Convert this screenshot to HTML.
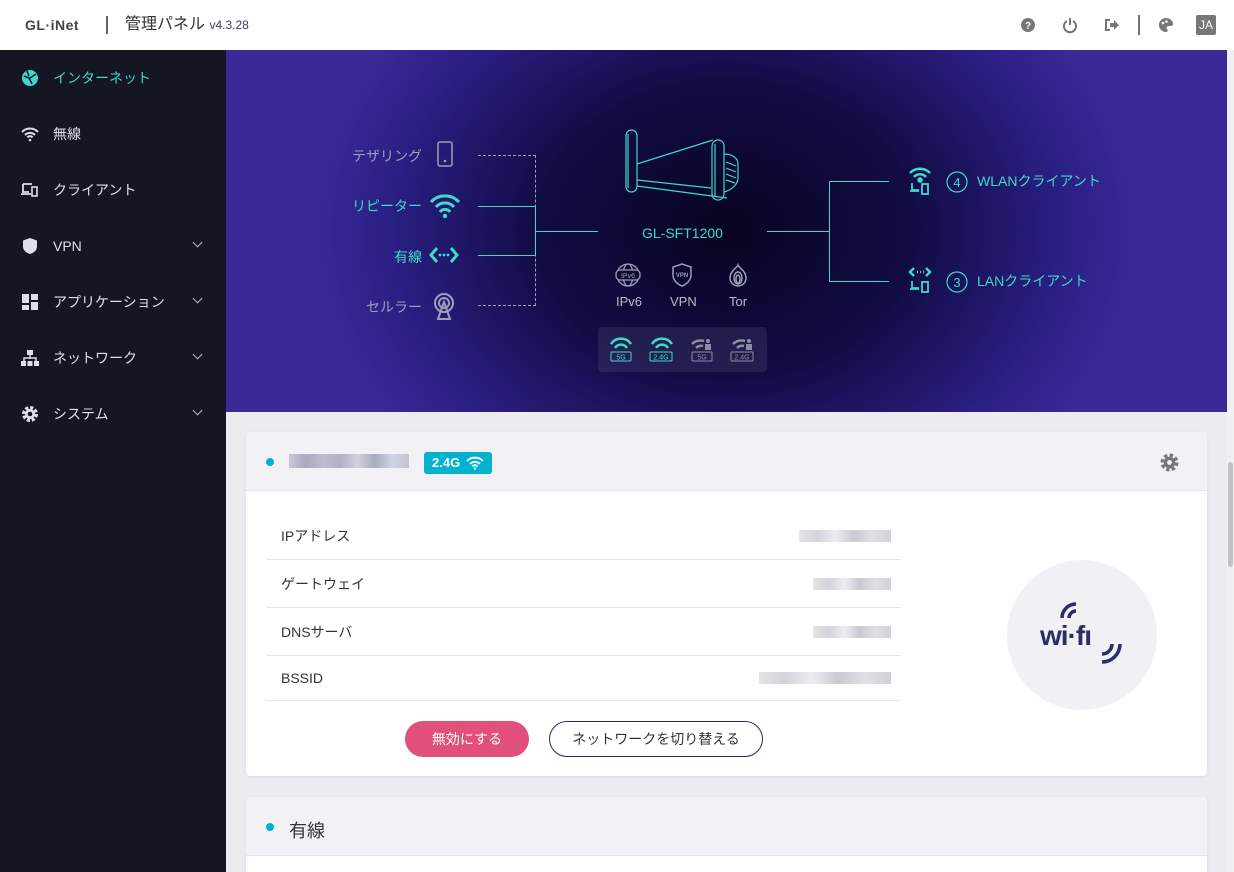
<!DOCTYPE html>
<html><head><meta charset="utf-8"><style>
*{box-sizing:border-box;margin:0;padding:0}
html,body{width:1234px;height:872px;overflow:hidden}
body{font-family:"Liberation Sans","Noto Sans CJK JP",sans-serif;background:#ebebf0;position:relative}
.hdr{position:absolute;left:0;top:0;width:1234px;height:50px;background:#fff}
.side{position:absolute;left:0;top:50px;width:226px;height:822px;background:#141624}
.nav{position:absolute;left:0;width:226px;height:56px;display:flex;align-items:center;color:#dde0ea;font-size:14px}
.nav .ic{position:absolute;left:21px;width:18px;height:18px}
.nav .t{position:absolute;left:53px}
.nav .ch{position:absolute;left:194px;width:7px;height:7px;border-right:1.3px solid #b8bccb;border-bottom:1.3px solid #b8bccb;transform:rotate(45deg);top:21px}
.hero{position:absolute;left:226px;top:50px;width:1001px;height:362px;background:radial-gradient(ellipse 420px 330px at 500px 180px,#070420 0%,#120c45 45%,#2a1f83 80%,#3a2a98 100%)}
.sb{position:absolute;left:1227px;top:50px;width:7px;height:822px;background:#f0f0f0}
.sb div{position:absolute;left:1px;top:412px;width:5px;height:105px;background:#c1c1c1;border-radius:3px}
.card{position:absolute;left:246px;width:961px;background:#fff;border-radius:4px;box-shadow:0 1px 3px rgba(0,0,0,.08)}
.ch2{height:59px;background:#f2f2f6;border-bottom:1px solid #e4e4ea;position:relative;border-radius:4px 4px 0 0}
.dot{position:absolute;left:20px;top:26px;width:8px;height:8px;border-radius:50%;background:#00b0d0}
.row{position:absolute;left:20px;width:635px;height:48px;border-bottom:1px solid #e6e6ea;font-size:14px;color:#333;display:flex;align-items:center;padding-left:15px}
.blur{position:absolute;right:10px;top:18px;height:12px;background:linear-gradient(90deg,#ddd,#c8c8d2,#e8e8ee,#bcbcc8,#d8d8de,#c4c4cc);opacity:.8}
.tl{position:absolute;font-size:14px;white-space:nowrap;line-height:16px}
.ln{position:absolute;background:#3fd9c8}
.dl{position:absolute;border-color:#9aa0b8;border-style:dashed}
</style></head><body>
<div class="hdr">
 <div style="position:absolute;left:25px;top:17px;font-size:14px;font-weight:bold;color:#444;letter-spacing:.5px;line-height:16px">GL·iNet</div>
 <div style="position:absolute;left:106px;top:16px;width:2px;height:18px;background:#666"></div>
 <div style="position:absolute;left:125px;top:16px;font-size:16px;color:#333;line-height:18px">管理パネル <span style="font-size:12px;color:#3a3a6a">v4.3.28</span></div>
 <svg style="position:absolute;left:1020px;top:17px" width="16" height="16"><circle cx="8" cy="8" r="7" fill="#777"/><text x="8" y="12" font-size="10" font-weight="bold" fill="#fff" text-anchor="middle" font-family="Liberation Sans">?</text></svg>
 <svg style="position:absolute;left:1062px;top:16px" width="16" height="18"><path d="M5 5a6 6 0 1 0 6 0" fill="none" stroke="#777" stroke-width="2"/><line x1="8" y1="2" x2="8" y2="9" stroke="#777" stroke-width="2"/></svg>
 <svg style="position:absolute;left:1104px;top:18px" width="16" height="14"><path d="M6 2H2v10h4" fill="none" stroke="#777" stroke-width="2"/><path d="M6 5h4V2l5 5-5 5V9H6z" fill="#777"/></svg>
 <div style="position:absolute;left:1138px;top:15px;width:2px;height:20px;background:#777"></div>
 <svg style="position:absolute;left:1158px;top:17px" width="16" height="16"><path d="M8 1a7 7 0 0 0 0 14c2 0 2-2 1-3s0-3 2-3h2c2 0 2-2 2-3A7 7 0 0 0 8 1z" fill="#777"/><circle cx="5" cy="6" r="1.3" fill="#fff"/><circle cx="8.5" cy="4.5" r="1.3" fill="#fff"/></svg>
 <div style="position:absolute;left:1196px;top:15px;width:20px;height:20px;background:#777;border-radius:2px;color:#fff;font-size:12px;text-align:center;line-height:20px">JA</div>
</div>
<div class="side">
 <div class="nav" style="top:0;color:#3fd9c8"><svg class="ic" style="top:19px" viewBox="0 0 18 18"><circle cx="9" cy="9" r="8" fill="#3fd9c8"/><path d="M3 7l5 2 3 6M9 9l6-4M6 2l2 5" stroke="#141624" stroke-width="1.6" fill="none"/></svg><span class="t">インターネット</span></div>
 <div class="nav" style="top:56px"><svg class="ic" style="top:19px" viewBox="0 0 18 18"><path d="M1 7a11 11 0 0 1 16 0M4 10a7 7 0 0 1 10 0M6.5 12.5a3 3 0 0 1 5 0" stroke="#dde0ea" stroke-width="2" fill="none"/><circle cx="9" cy="15" r="1.3" fill="#dde0ea"/></svg><span class="t">無線</span></div>
 <div class="nav" style="top:112px"><svg class="ic" style="top:19px" viewBox="0 0 18 18"><path d="M2 3h9M2 3v8h6M0 13h10" stroke="#dde0ea" stroke-width="1.8" fill="none"/><rect x="11" y="6" width="5" height="9" fill="none" stroke="#dde0ea" stroke-width="1.6"/></svg><span class="t">クライアント</span></div>
 <div class="nav" style="top:168px"><svg class="ic" style="top:19px" viewBox="0 0 18 18"><path d="M9 1l7 2.5v6c0 4-3.5 6.5-7 7.5-3.5-1-7-3.5-7-7.5v-6z" fill="#dde0ea"/></svg><span class="t">VPN</span><i class="ch"></i></div>
 <div class="nav" style="top:224px"><svg class="ic" style="top:19px" viewBox="0 0 18 18"><rect x="1" y="1" width="7" height="9" fill="#dde0ea"/><rect x="10" y="1" width="7" height="6" fill="#dde0ea"/><rect x="1" y="12" width="7" height="5" fill="#dde0ea"/><rect x="10" y="9" width="7" height="8" fill="#dde0ea"/></svg><span class="t">アプリケーション</span><i class="ch"></i></div>
 <div class="nav" style="top:280px"><svg class="ic" style="top:19px" viewBox="0 0 18 18"><rect x="6" y="1" width="6" height="5" fill="#dde0ea"/><path d="M9 6v4M3 12V9h12v3" stroke="#dde0ea" stroke-width="1.5" fill="none"/><rect x="0" y="12" width="5" height="5" fill="#dde0ea"/><rect x="6.5" y="12" width="5" height="5" fill="#dde0ea"/><rect x="13" y="12" width="5" height="5" fill="#dde0ea"/></svg><span class="t">ネットワーク</span><i class="ch"></i></div>
 <div class="nav" style="top:336px"><svg class="ic" style="top:19px" viewBox="0 0 18 18"><circle cx="9" cy="9" r="6" fill="none" stroke="#dde0ea" stroke-width="4" stroke-dasharray="3 1.7"/><circle cx="9" cy="9" r="5" fill="#dde0ea"/><circle cx="9" cy="9" r="2.3" fill="#141624"/></svg><span class="t">システム</span><i class="ch"></i></div>
</div>
<div class="hero">
 <div class="tl" style="right:805px;top:98px;color:#9aa0b8">テザリング</div>
 <svg style="position:absolute;left:211px;top:91px" width="16" height="27"><rect x="1" y="1" width="14" height="24" rx="2" fill="none" stroke="#9aa0b8" stroke-width="1.5"/><circle cx="8" cy="20" r="1.3" fill="#9aa0b8"/></svg>
 <div class="tl" style="right:805px;top:148px;color:#3fd9c8">リピーター</div>
 <svg style="position:absolute;left:203px;top:143px" width="32" height="26"><path d="M2 9a19 19 0 0 1 28 0M7 14a12 12 0 0 1 18 0M11 19a6 6 0 0 1 10 0" stroke="#3fd9c8" stroke-width="3" fill="none"/><circle cx="16" cy="23" r="2.2" fill="#3fd9c8"/></svg>
 <div class="tl" style="right:805px;top:199px;color:#3fd9c8">有線</div>
 <svg style="position:absolute;left:203px;top:196px" width="30" height="18"><path d="M8 2L2 9l6 7M22 2l6 7-6 7" stroke="#3fd9c8" stroke-width="3" fill="none"/><circle cx="11" cy="9" r="1.4" fill="#3fd9c8"/><circle cx="15" cy="9" r="1.4" fill="#3fd9c8"/><circle cx="19" cy="9" r="1.4" fill="#3fd9c8"/></svg>
 <div class="tl" style="right:805px;top:249px;color:#9aa0b8">セルラー</div>
 <svg style="position:absolute;left:206px;top:243px" width="24" height="28"><circle cx="12" cy="10" r="9" fill="none" stroke="#9aa0b8" stroke-width="2"/><circle cx="12" cy="10" r="5" fill="none" stroke="#9aa0b8" stroke-width="2"/><path d="M12 9L6 26h12z" fill="none" stroke="#9aa0b8" stroke-width="2"/></svg>
 <div class="dl" style="left:252px;top:105px;width:58px;height:151px;border-width:1px 1px 1px 0"></div>
 <div class="ln" style="left:252px;top:156px;width:58px;height:1px"></div>
 <div class="ln" style="left:252px;top:205px;width:58px;height:1px"></div>
 <div class="ln" style="left:309px;top:156px;width:1px;height:50px"></div>
 <div class="ln" style="left:310px;top:181px;width:62px;height:1px"></div>
 <svg style="position:absolute;left:396px;top:78px" width="124" height="74" fill="none" stroke="#3fd9c8" stroke-width="1.2">
  <rect x="4" y="2" width="11" height="62" rx="5.5"/>
  <path d="M6 6v54"/>
  <path d="M15 36l76-24"/>
  <path d="M15 58l90 12"/>
  <path d="M15 52l74 8"/>
  <rect x="90" y="12" width="12" height="60" rx="6"/>
  <path d="M93 16v52"/>
  <path d="M102 26c8 0 14 4 14 10v14c0 6-6 12-14 14"/>
  <path d="M104 34l10 4M104 40l10 4M104 46l10 4M104 52l9 3"/>
 </svg>
 <div class="tl" style="left:416px;top:175px;color:#3fd9c8">GL-SFT1200</div>
 <div class="ln" style="left:541px;top:181px;width:62px;height:1px"></div>
 <svg style="position:absolute;left:388px;top:213px" width="28" height="24" fill="none" stroke="#9aa0b8" stroke-width="1.3"><circle cx="14" cy="12" r="11"/><ellipse cx="14" cy="12" rx="5" ry="11"/><rect x="2" y="7" width="24" height="10" rx="4" fill="#0c0830"/><text x="14" y="15" font-size="7" fill="#9aa0b8" stroke="none" text-anchor="middle" font-family="Liberation Sans">IPv6</text></svg>
 <div class="tl" style="left:390px;top:244px;color:#b8bccb;font-size:13px">IPv6</div>
 <svg style="position:absolute;left:444px;top:212px" width="24" height="26" fill="none" stroke="#9aa0b8" stroke-width="1.5"><path d="M12 2l9 3v8c0 5-4 9-9 11-5-2-9-6-9-11V5z"/><text x="12" y="15" font-size="6" fill="#9aa0b8" stroke="none" text-anchor="middle" font-family="Liberation Sans" font-weight="bold">VPN</text></svg>
 <div class="tl" style="left:444px;top:244px;color:#b8bccb;font-size:13px">VPN</div>
 <svg style="position:absolute;left:500px;top:212px" width="24" height="26" fill="none" stroke="#9aa0b8" stroke-width="1.5"><path d="M12 3c-1 3-8 6-8 13a8 8 0 0 0 16 0c0-7-7-10-8-13z"/><ellipse cx="12" cy="16" rx="4" ry="6"/><ellipse cx="12" cy="17" rx="2" ry="4"/></svg>
 <div class="tl" style="left:503px;top:244px;color:#b8bccb;font-size:13px">Tor</div>
 <div style="position:absolute;left:372px;top:277px;width:169px;height:45px;background:rgba(255,255,255,.08);border-radius:4px"></div>
 <svg style="position:absolute;left:380px;top:286px" width="160" height="28" font-family="Liberation Sans" font-size="7" text-anchor="middle">
  <g stroke="#3fd9c8" fill="none" stroke-width="2.5"><path d="M5 8a12 12 0 0 1 20 0M9 12a7 7 0 0 1 12 0"/><path d="M46 8a12 12 0 0 1 20 0M50 12a7 7 0 0 1 12 0"/></g>
  <rect x="5" y="16" width="20" height="9" rx="1" fill="none" stroke="#3fd9c8"/><text x="15" y="23.5" fill="#3fd9c8">5G</text>
  <rect x="44" y="16" width="22" height="9" rx="1" fill="none" stroke="#3fd9c8"/><text x="55" y="23.5" fill="#3fd9c8">2.4G</text>
  <g stroke="#8a8ea4" fill="none" stroke-width="2.5"><path d="M86 8a12 12 0 0 1 12-3M90 12a7 7 0 0 1 7-2"/><path d="M127 8a12 12 0 0 1 12-3M131 12a7 7 0 0 1 7-2"/></g>
  <rect x="99" y="8" width="6" height="6" fill="#8a8ea4"/><circle cx="102" cy="5" r="2" fill="#8a8ea4"/><rect x="140" y="8" width="6" height="6" fill="#8a8ea4"/><circle cx="143" cy="5" r="2" fill="#8a8ea4"/>
  <rect x="86" y="16" width="20" height="9" rx="1" fill="none" stroke="#8a8ea4"/><text x="96" y="23.5" fill="#8a8ea4">5G</text>
  <rect x="125" y="16" width="22" height="9" rx="1" fill="none" stroke="#8a8ea4"/><text x="136" y="23.5" fill="#8a8ea4">2.4G</text>
 </svg>
 <div class="ln" style="left:603px;top:131px;width:1px;height:100px"></div>
 <div class="ln" style="left:603px;top:131px;width:60px;height:1px"></div>
 <div class="ln" style="left:603px;top:231px;width:60px;height:1px"></div>
 <svg style="position:absolute;left:682px;top:116px" width="24" height="30" fill="none" stroke="#3fd9c8" stroke-width="2.5"><path d="M2 7a14 14 0 0 1 20 0M6 11a8 8 0 0 1 12 0"/><circle cx="12" cy="14" r="1.5" fill="#3fd9c8"/><path d="M4 17v7h7M2 25h9" stroke-width="1.8"/><rect x="14" y="18" width="6" height="10" stroke-width="1.8"/></svg>
 <svg style="position:absolute;left:720px;top:121px" width="22" height="22"><circle cx="11" cy="11" r="10" fill="none" stroke="#3fd9c8" stroke-width="1.2"/><text x="11" y="16" font-size="13" fill="#3fd9c8" text-anchor="middle" font-family="Liberation Sans">4</text></svg>
 <div class="tl" style="left:751px;top:123px;color:#3fd9c8">WLANクライアント</div>
 <svg style="position:absolute;left:682px;top:216px" width="24" height="30" fill="none" stroke="#3fd9c8" stroke-width="2.5"><path d="M6 2L2 6l4 4M18 2l4 4-4 4"/><path d="M9 6h1M12 6h1M15 6h1"/><path d="M4 15v7h7M2 23h9" stroke-width="1.8"/><rect x="14" y="16" width="6" height="10" stroke-width="1.8"/></svg>
 <svg style="position:absolute;left:720px;top:221px" width="22" height="22"><circle cx="11" cy="11" r="10" fill="none" stroke="#3fd9c8" stroke-width="1.2"/><text x="11" y="16" font-size="13" fill="#3fd9c8" text-anchor="middle" font-family="Liberation Sans">3</text></svg>
 <div class="tl" style="left:751px;top:223px;color:#3fd9c8">LANクライアント</div>
</div>
<div class="sb"><div></div></div>
<div class="card" style="top:432px;height:344px">
 <div class="ch2"><div class="dot"></div>
  <div style="position:absolute;left:43px;top:22px;width:120px;height:14px;background:linear-gradient(90deg,#c8c8d4,#a9aac0,#c0bccb,#b0b2c8,#d4d0da,#a8aac0,#d0d4e4,#c4c4d0)"></div>
  <div style="position:absolute;left:178px;top:20px;width:68px;height:22px;background:#00b4d0;border-radius:3px;color:#fff;font-size:13px;font-weight:bold;line-height:22px;padding-left:8px">2.4G
   <svg style="position:absolute;left:42px;top:4px" width="18" height="14"><path d="M1 5a11 11 0 0 1 16 0M4 8a7 7 0 0 1 10 0M6.5 10.5a3 3 0 0 1 5 0" stroke="#fff" stroke-width="1.8" fill="none"/><circle cx="9" cy="12.5" r="1.2" fill="#fff"/></svg></div>
  <svg style="position:absolute;left:914px;top:21px" width="19" height="19" viewBox="0 0 18 18"><circle cx="9" cy="9" r="6.5" fill="none" stroke="#777" stroke-width="4" stroke-dasharray="3 2.1"/><circle cx="9" cy="9" r="5.5" fill="#777"/><circle cx="9" cy="9" r="2.3" fill="#f2f2f6"/></svg>
 </div>
 <div class="row" style="top:80px">IPアドレス<div class="blur" style="width:92px"></div></div>
 <div class="row" style="top:128px">ゲートウェイ<div class="blur" style="width:78px"></div></div>
 <div class="row" style="top:176px">DNSサーバ<div class="blur" style="width:78px"></div></div>
 <div class="row" style="top:224px;height:45px">BSSID<div class="blur" style="width:132px;top:16px"></div></div>
 <div style="position:absolute;left:159px;top:289px;width:124px;height:36px;background:#e0507a;border-radius:18px;color:#fff;font-size:14px;text-align:center;line-height:36px">無効にする</div>
 <div style="position:absolute;left:303px;top:289px;width:214px;height:36px;border:1px solid #2a2a6a;border-radius:18px;color:#333;font-size:14px;text-align:center;line-height:34px">ネットワークを切り替える</div>
 <div style="position:absolute;left:761px;top:128px;width:150px;height:150px;border-radius:50%;background:#f0f0f5"></div>
 <svg style="position:absolute;left:780px;top:160px" width="110" height="90"><g fill="none" stroke="#2a2d66" stroke-width="3.5"><path d="M36 26A14 14 0 0 1 50 12M43 26A7 7 0 0 1 50 19"/><path d="M94 52A18 18 0 0 1 76 70M86 52A10 10 0 0 1 76 62"/></g><text x="14" y="53" font-size="28" font-weight="bold" fill="#2a2d66" font-family="Liberation Sans" letter-spacing="-1">wi·fı</text></svg>
</div>
<div class="card" style="top:797px;height:75px;border-radius:4px 4px 0 0">
 <div class="ch2"><div class="dot"></div><div style="position:absolute;left:43px;top:20px;font-size:18px;color:#333">有線</div></div>
</div>
</body></html>
